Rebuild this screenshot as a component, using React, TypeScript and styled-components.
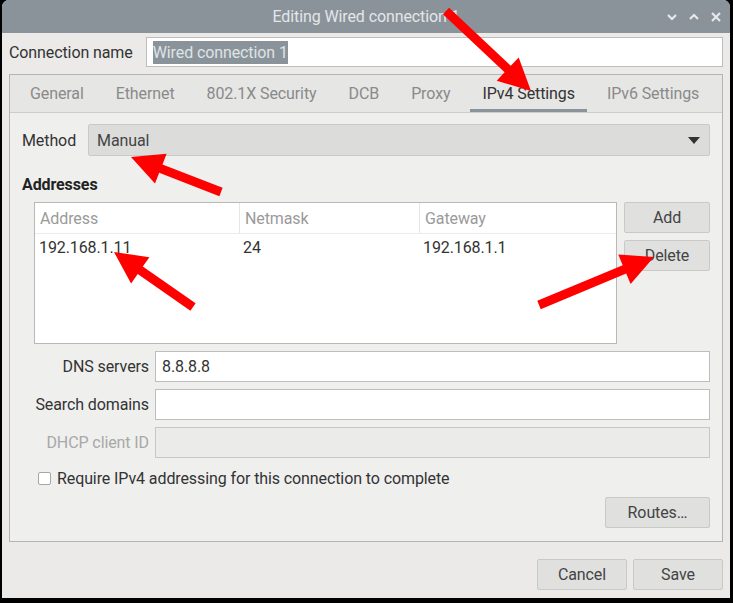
import React from "react"
import styled, { createGlobalStyle } from "styled-components"

const GlobalStyle = createGlobalStyle`
  html, body {
    margin: 0;
    padding: 0;
    background: #000000;
  }
  body {
    font-family: Roboto, "Liberation Sans", sans-serif;
    font-size: 16px;
    letter-spacing: -0.1px;
    color: #333333;
  }
`

const Page = styled.div`
  position: relative;
  width: 733px;
  height: 603px;
  background: #000000;
  overflow: hidden;
`

const Window = styled.div`
  margin-left: 2px;
  width: 728px;
  height: 598px;
  background: #ebeae9;
  border-radius: 7px 7px 0 0;
  overflow: hidden;
  display: flex;
  flex-direction: column;
  box-sizing: border-box;
`

const TitleBar = styled.div`
  height: 33px;
  flex-shrink: 0;
  background: #8b939a;
  display: flex;
  align-items: center;
  justify-content: center;
  position: relative;
  color: #e4e6e8;
  font-size: 16px;
`

const TitleButtons = styled.div`
  position: absolute;
  right: 8px;
  top: 0;
  height: 100%;
  display: flex;
  align-items: center;
  gap: 10px;
`

const Body = styled.div`
  flex: 1;
  display: flex;
  flex-direction: column;
  padding: 4px 7px 8px 7px;
`

const NameRow = styled.div`
  display: flex;
  align-items: center;
  gap: 13px;
`

const Label = styled.span<{ $disabled?: boolean }>`
  color: ${({ $disabled }) => ($disabled ? "#a8a8a8" : "#333333")};
  white-space: nowrap;
`

const TextInput = styled.div<{ $disabled?: boolean; $h?: number }>`
  flex: 1;
  height: ${({ $h }) => $h ?? 31}px;
  box-sizing: border-box;
  background: ${({ $disabled }) => ($disabled ? "#ebebea" : "#ffffff")};
  border: 1px solid ${({ $disabled }) => ($disabled ? "#c6c6c6" : "#bdbdbd")};
  display: flex;
  align-items: center;
  padding-left: 6px;
  color: #333333;
`

const Selection = styled.span`
  background: #8b939a;
  color: #dfe3e6;
  padding: 2px 0;
`

const Notebook = styled.div`
  margin-top: 7px;
  height: 468px;
  box-sizing: border-box;
  border: 1px solid #b4b4b4;
  background: #efefee;
  display: flex;
  flex-direction: column;
`

const TabStrip = styled.div`
  height: 38px;
  box-sizing: border-box;
  display: flex;
  padding-left: 4px;
  background: #e6e6e5;
  border-bottom: 1px solid #cbcbca;
`

const Tab = styled.div<{ $active?: boolean }>`
  margin: 0 4px;
  padding: 0 12px;
  display: flex;
  align-items: center;
  color: ${({ $active }) => ($active ? "#333333" : "#8a8a8a")};
  border-bottom: 3px solid ${({ $active }) => ($active ? "#8b939a" : "transparent")};
  box-sizing: border-box;
  padding-top: 2px;
`

const Content = styled.div`
  flex: 1;
  padding: 11px 12px 0 12px;
  display: flex;
  flex-direction: column;
`

const MethodRow = styled.div`
  display: flex;
  align-items: center;
  gap: 12px;
`

const Combo = styled.div`
  flex: 1;
  height: 32px;
  box-sizing: border-box;
  background: #dcdcdb;
  border: 1px solid #c9c9c8;
  border-radius: 2px;
  display: flex;
  align-items: center;
  justify-content: space-between;
  padding: 0 9px 0 8px;
  color: #444444;
`

const SectionTitle = styled.div`
  margin-top: 19px;
  font-weight: bold;
  height: 19px;
  line-height: 19px;
  color: #222222;
`

const AddressArea = styled.div`
  margin-top: 8px;
  margin-left: 12px;
  display: flex;
  gap: 7px;
`

const Table = styled.div`
  width: 583px;
  height: 142px;
  box-sizing: border-box;
  background: #ffffff;
  border: 1px solid #b8b8b8;
`

const TableRow = styled.div<{ $header?: boolean }>`
  display: grid;
  grid-template-columns: 204px 180px 1fr;
  height: ${({ $header }) => ($header ? "31px" : "27px")};
  border-bottom: ${({ $header }) => ($header ? "1px solid #ececec" : "none")};
  box-sizing: border-box;
`

const Cell = styled.div<{ $header?: boolean; $sep?: boolean }>`
  display: flex;
  align-items: center;
  padding-left: ${({ $header }) => ($header ? "5px" : "4px")};
  color: ${({ $header }) => ($header ? "#9a9a9a" : "#333333")};
  border-left: ${({ $sep }) => ($sep ? "1px solid #e6e6e6" : "none")};
`

const SideButtons = styled.div`
  display: flex;
  flex-direction: column;
  gap: 7px;
`

const Button = styled.div<{ $w: number }>`
  width: ${({ $w }) => $w}px;
  height: 31px;
  box-sizing: border-box;
  background: #e0e0df;
  border: 1px solid #c9c9c8;
  border-radius: 2px;
  display: flex;
  align-items: center;
  justify-content: center;
  color: #444444;
`

const FieldGrid = styled.div`
  margin-top: 7px;
  margin-left: 12px;
  display: grid;
  grid-template-columns: 115px 1fr;
  column-gap: 6px;
  row-gap: 7px;
  align-items: center;
`

const FieldLabel = styled(Label)`
  justify-self: end;
`

const CheckRow = styled.div`
  margin-top: 12px;
  margin-left: 16px;
  display: flex;
  align-items: center;
  gap: 6px;
  height: 17px;
`

const CheckBox = styled.div`
  width: 13px;
  height: 13px;
  box-sizing: border-box;
  background: #ffffff;
  border: 1px solid #a6a6a6;
  border-radius: 2px;
`

const RoutesRow = styled.div`
  margin-top: 10px;
  display: flex;
  justify-content: flex-end;
`

const DialogButtons = styled.div`
  margin-top: 17px;
  display: flex;
  justify-content: flex-end;
  gap: 6px;
`

const Overlay = styled.svg`
  position: absolute;
  left: 0;
  top: 0;
  pointer-events: none;
`

function arrowPoints(x1: number, y1: number, x2: number, y2: number) {
  const dx = x2 - x1
  const dy = y2 - y1
  const len = Math.hypot(dx, dy)
  const ux = dx / len
  const uy = dy / len
  const nx = -uy
  const ny = ux
  const w = 4.5
  const head = 32
  const hw = 16
  const bx = x2 - ux * head
  const by = y2 - uy * head
  const pts = [
    [x1 + nx * w, y1 + ny * w],
    [bx + nx * w, by + ny * w],
    [bx + nx * hw, by + ny * hw],
    [x2, y2],
    [bx - nx * hw, by - ny * hw],
    [bx - nx * w, by - ny * w],
    [x1 - nx * w, y1 - ny * w],
  ]
  return pts.map(p => p.map(v => v.toFixed(1)).join(",")).join(" ")
}

// annotation arrows: tail x, tail y, tip x, tip y
const arrows = [
  [446, 11, 531, 91],
  [221, 192, 131, 157],
  [193, 307, 114, 252],
  [539, 305, 654, 257],
]

function ChevronDown() {
  return (
    <svg width="12" height="10" viewBox="0 0 12 10">
      <path d="M2 3 L6 7 L10 3" fill="none" stroke="#e6e8ea" strokeWidth="2.2" />
    </svg>
  )
}

function ChevronUp() {
  return (
    <svg width="12" height="10" viewBox="0 0 12 10">
      <path d="M2 7 L6 3 L10 7" fill="none" stroke="#e6e8ea" strokeWidth="2.2" />
    </svg>
  )
}

function CloseIcon() {
  return (
    <svg width="12" height="12" viewBox="0 0 12 12">
      <path d="M2 2 L10 10 M10 2 L2 10" fill="none" stroke="#e6e8ea" strokeWidth="2.2" />
    </svg>
  )
}

const tabs = ["General", "Ethernet", "802.1X Security", "DCB", "Proxy", "IPv4 Settings", "IPv6 Settings"]

export default function App() {
  return (
    <Page>
      <GlobalStyle />
      <Window>
        <TitleBar>
          Editing Wired connection 1
          <TitleButtons>
            <ChevronDown />
            <ChevronUp />
            <CloseIcon />
          </TitleButtons>
        </TitleBar>
        <Body>
          <NameRow>
            <Label>Connection name</Label>
            <TextInput $h={30}>
              <Selection>Wired connection 1</Selection>
            </TextInput>
          </NameRow>
          <Notebook>
            <TabStrip>
              {tabs.map(t => (
                <Tab key={t} $active={t === "IPv4 Settings"}>{t}</Tab>
              ))}
            </TabStrip>
            <Content>
              <MethodRow>
                <Label>Method</Label>
                <Combo>
                  Manual
                  <svg width="12" height="7" viewBox="0 0 12 7">
                    <path d="M0 0 L12 0 L6 7 Z" fill="#333333" />
                  </svg>
                </Combo>
              </MethodRow>
              <SectionTitle>Addresses</SectionTitle>
              <AddressArea>
                <Table>
                  <TableRow $header>
                    <Cell $header>Address</Cell>
                    <Cell $header $sep>Netmask</Cell>
                    <Cell $header $sep>Gateway</Cell>
                  </TableRow>
                  <TableRow>
                    <Cell>192.168.1.11</Cell>
                    <Cell>24</Cell>
                    <Cell>192.168.1.1</Cell>
                  </TableRow>
                </Table>
                <SideButtons>
                  <Button $w={86}>Add</Button>
                  <Button $w={86}>Delete</Button>
                </SideButtons>
              </AddressArea>
              <FieldGrid>
                <FieldLabel>DNS servers</FieldLabel>
                <TextInput>8.8.8.8</TextInput>
                <FieldLabel>Search domains</FieldLabel>
                <TextInput />
                <FieldLabel $disabled>DHCP client ID</FieldLabel>
                <TextInput $disabled />
              </FieldGrid>
              <CheckRow>
                <CheckBox />
                <Label>Require IPv4 addressing for this connection to complete</Label>
              </CheckRow>
              <RoutesRow>
                <Button $w={105}>Routes…</Button>
              </RoutesRow>
            </Content>
          </Notebook>
          <DialogButtons>
            <Button $w={90}>Cancel</Button>
            <Button $w={90}>Save</Button>
          </DialogButtons>
        </Body>
      </Window>
      <Overlay width="733" height="603" viewBox="0 0 733 603">
        {arrows.map((a, i) => (
          <polygon key={i} points={arrowPoints(a[0], a[1], a[2], a[3])} fill="#ff0000" />
        ))}
      </Overlay>
    </Page>
  )
}
